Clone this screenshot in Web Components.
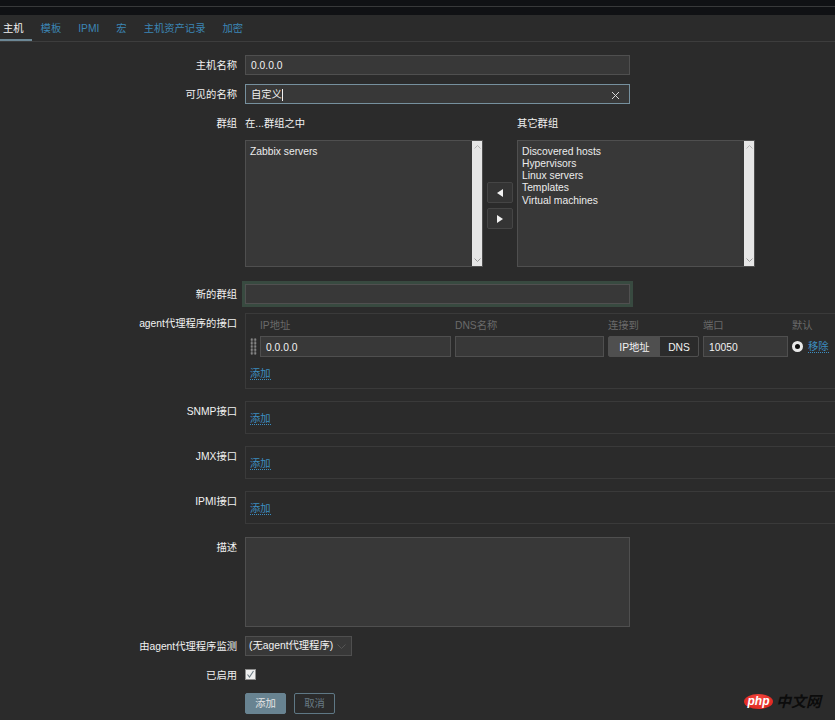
<!doctype html>
<html lang="zh">
  <head>
    <meta charset="UTF-8">
    <title>主机</title>
    <style>
      html, body {
        margin: 0;
        height: 720px;
        overflow: hidden;
        background: #2b2b2b;
        color: #f2f2f2;
        font: 10.3px/12px "Liberation Sans", "Noto Sans CJK SC", sans-serif;
      }
    </style>
  </head>
  <body>
    <top-bar></top-bar>
    <tab-nav>
      <tab-item active>主机</tab-item>
      <tab-item>模板</tab-item>
      <tab-item>IPMI</tab-item>
      <tab-item>宏</tab-item>
      <tab-item>主机资产记录</tab-item>
      <tab-item>加密</tab-item>
    </tab-nav>

    <host-form>
      <form-row label="主机名称" style="margin-top:13px">
        <text-box value="0.0.0.0" style="width:385px"></text-box>
      </form-row>
      <form-row label="可见的名称" style="margin-top:9px">
        <text-box value="自定义" focused clearable style="width:385px"></text-box>
      </form-row>
      <form-row label="群组" style="margin-top:9px">
        <group-picker>
          <list-box slot="in" title="在...群组之中">
            <div>Zabbix servers</div>
          </list-box>
          <list-box slot="other" title="其它群组">
            <div>Discovered hosts</div>
            <div>Hypervisors</div>
            <div>Linux servers</div>
            <div>Templates</div>
            <div style="margin-top:1px">Virtual machines</div>
          </list-box>
        </group-picker>
      </form-row>
      <form-row label="新的群组" style="margin-top:17px">
        <text-box glow style="width:385px"></text-box>
      </form-row>
      <form-row label="agent代理程序的接口" style="margin-top:9px">
        <agent-table></agent-table>
      </form-row>
      <form-row label="SNMP接口" style="margin-top:12px"><add-box></add-box></form-row>
      <form-row label="JMX接口" style="margin-top:12px"><add-box></add-box></form-row>
      <form-row label="IPMI接口" style="margin-top:12px"><add-box></add-box></form-row>
      <form-row label="描述" style="margin-top:13px">
        <text-box style="width:385px;height:90px"></text-box>
      </form-row>
      <form-row label="由agent代理程序监测" style="margin-top:9px">
        <select-box value="(无agent代理程序)"></select-box>
      </form-row>
      <form-row label="已启用" style="margin-top:9px">
        <check-box></check-box>
      </form-row>
      <form-row style="margin-top:8px">
        <form-buttons></form-buttons>
      </form-row>
    </host-form>

    <php-logo></php-logo>

    <template id="top-bar-template">
      <style>
        :host { display: block; height: 15px; background: #101114; box-sizing: border-box; padding-top: 6px; }
        div { height: 1px; background: #38393a; }
      </style>
      <div></div>
    </template>

    <template id="tab-nav-template">
      <style>
        :host {
          display: flex;
          height: 27px;
          box-sizing: border-box;
          border-bottom: 1px solid #3d3d3d;
          margin-left: -5.5px;
        }
      </style>
      <slot></slot>
    </template>

    <template id="tab-item-template">
      <style>
        :host {
          display: block;
          height: 26px;
          box-sizing: border-box;
          padding: 1px 8.5px 0;
          line-height: 26px;
          color: #3c86b5;
          border-bottom: 2px solid transparent;
        }
        :host([active]) { color: #f2f2f2; border-bottom-color: #6c8795; }
      </style>
      <slot></slot>
    </template>

    <template id="host-form-template">
      <style>
        :host { display: flex; flex-direction: column; }
      </style>
      <slot></slot>
    </template>

    <template id="form-row-template">
      <style>
        :host { display: grid; grid-template-columns: 237px 1fr; column-gap: 8px; }
        .label { text-align: right; height: 20px; padding-top: 1px; box-sizing: border-box; line-height: 20px; color: #f2f2f2; white-space: nowrap; }
        .body { min-width: 0; }
      </style>
      <div class="label" id="label"></div>
      <div class="body"><slot></slot></div>
    </template>

    <template id="text-box-template">
      <style>
        :host {
          display: flex;
          align-items: center;
          height: 20px;
          box-sizing: border-box;
          padding: 2px 5px 0;
          background: #383838;
          border: 1px solid #4f4f4f;
          color: #f2f2f2;
        }
        :host([focused]) { border-color: #76909e; }
        :host([glow]) { box-shadow: 0 0 0 3px #384a40; border-color: #505050; }
        .caret { width: 1px; height: 12px; background: #f2f2f2; display: none; }
        :host([focused]) .caret { display: block; }
        svg { margin-left: auto; margin-right: 4px; display: none; }
        :host([clearable]) svg { display: block; }
      </style>
      <span id="value"></span><span class="caret"></span>
      <svg width="9" height="9" viewBox="0 0 9 9"><path d="M1 1l7 7M8 1l-7 7" stroke="#d8d8d8" stroke-width="1" fill="none"/></svg>
    </template>

    <template id="group-picker-template">
      <style>
        :host { display: grid; grid-template-columns: 238px 34px 238px; align-items: stretch; }
        .move { display: flex; flex-direction: column; align-items: center; gap: 5px; padding-top: 69px; }
        button {
          width: 26px;
          height: 21px;
          padding: 0;
          display: flex;
          align-items: center;
          justify-content: center;
          background: #343434;
          border: 1px solid #454545;
          border-radius: 2px;
        }
      </style>
      <slot name="in"></slot>
      <div class="move">
        <button><svg width="6" height="8" viewBox="0 0 6 8"><path d="M6 0v8L0 4z" fill="#f2f2f2"/></svg></button>
        <button><svg width="6" height="8" viewBox="0 0 6 8"><path d="M0 0v8l6-4z" fill="#f2f2f2"/></svg></button>
      </div>
      <slot name="other"></slot>
    </template>

    <template id="list-box-template">
      <style>
        :host { display: block; }
        .title { height: 20px; box-sizing: border-box; padding-top: 1px; line-height: 20px; margin-bottom: 7px; white-space: nowrap; }
        .box {
          display: flex;
          height: 127px;
          box-sizing: border-box;
          background: #383838;
          border: 1px solid #4f4f4f;
        }
        .items { flex: 1; padding: 5px 4px; color: #ececec; }
        .bar {
          width: 10px;
          background: #e6e6e6;
          display: flex;
          flex-direction: column;
          justify-content: space-between;
          align-items: center;
          padding: 4px 0;
        }
      </style>
      <div class="title" id="title"></div>
      <div class="box">
        <div class="items"><slot></slot></div>
        <div class="bar">
          <svg width="7" height="4" viewBox="0 0 7 4"><path d="M.5 3.5l3-3 3 3" stroke="#b4b4b4" fill="none"/></svg>
          <svg width="7" height="4" viewBox="0 0 7 4"><path d="M.5.5l3 3 3-3" stroke="#9a9a9a" fill="none"/></svg>
        </div>
      </div>
    </template>

    <template id="agent-table-template">
      <style>
        :host {
          display: block;
          height: 76px;
          margin-right: -10px;
          box-sizing: border-box;
          border: 1px solid #3a3a3a;
          padding: 4px 0 0 4px;
        }
        .grid {
          display: grid;
          grid-template-columns: 6px 191px 149px 91px 85px auto;
          column-gap: 4px;
          grid-template-rows: 14px 21px;
          row-gap: 4px;
          align-items: center;
        }
        .head { color: #6a6a6a; white-space: nowrap; line-height: 14px; padding-top: 1px; height: 14px; box-sizing: border-box; }
        .field {
          height: 21px;
          box-sizing: border-box;
          padding: 0 5px;
          line-height: 21px;
          background: #383838;
          border: 1px solid #4f4f4f;
        }
        .grip {
          width: 7px;
          height: 17px;
          background-image: radial-gradient(circle, #858585 1.3px, transparent 1.4px);
          background-size: 3.5px 3.4px;
        }
        .toggle { display: flex; height: 21px; box-sizing: border-box; border: 1px solid #4f4f4f; border-radius: 2px; }
        .toggle span { text-align: center; line-height: 21px; height: 19px; }
        .toggle .on { width: 51px; background: #4f4f4f; }
        .toggle .off { flex: 1; }
        .end { display: flex; align-items: center; gap: 5px; }
        .radio {
          width: 11px;
          height: 11px;
          box-sizing: border-box;
          border-radius: 50%;
          background: #0b0b0b;
          border: 3px solid #e8e8e8;
        }
        a { color: #3c8dc0; border-bottom: 1px dotted #3c8dc0; line-height: 14px; height: 12px; display: inline-block; }
        .add { margin-top: 10px; }
      </style>
      <div class="grid">
        <span></span>
        <span class="head">IP地址</span>
        <span class="head">DNS名称</span>
        <span class="head">连接到</span>
        <span class="head">端口</span>
        <span class="head">默认</span>
        <span class="grip"></span>
        <div class="field">0.0.0.0</div>
        <div class="field"></div>
        <div class="toggle"><span class="on">IP地址</span><span class="off">DNS</span></div>
        <div class="field">10050</div>
        <div class="end"><span class="radio"></span><a>移除</a></div>
      </div>
      <a class="add">添加</a>
    </template>

    <template id="add-box-template">
      <style>
        :host {
          display: block;
          height: 33px;
          margin-right: -10px;
          box-sizing: border-box;
          border: 1px solid #3a3a3a;
          padding: 10px 0 0 4px;
        }
        a { display: inline-block; color: #3c8dc0; border-bottom: 1px dotted #3c8dc0; line-height: 14px; height: 12px; }
      </style>
      <a>添加</a>
    </template>

    <template id="select-box-template">
      <style>
        :host {
          display: flex;
          align-items: center;
          width: 107px;
          height: 20px;
          box-sizing: border-box;
          padding: 0 3px;
          background: #383838;
          border: 1px solid #4f4f4f;
          white-space: nowrap;
        }
        svg { margin-left: auto; margin-right: 2px; }
      </style>
      <span id="value"></span>
      <svg width="9" height="5" viewBox="0 0 9 5"><path d="M.5.5l4 4 4-4" stroke="#555" fill="none"/></svg>
    </template>

    <template id="check-box-template">
      <style>
        :host {
          display: block;
          width: 11px;
          height: 11px;
          margin-top: 4px;
          box-sizing: border-box;
          background: #efefef;
          border: 1px solid #8f8f8f;
        }
        svg { display: block; }
      </style>
      <svg width="9" height="9" viewBox="0 0 9 9"><path d="M1.5 4.5l2 2.5 4-6" stroke="#6f7d86" stroke-width="1.1" fill="none"/></svg>
    </template>

    <template id="form-buttons-template">
      <style>
        :host { display: flex; gap: 8px; }
        button {
          width: 41px;
          height: 21px;
          padding: 0;
          border-radius: 2px;
          font: inherit;
          box-sizing: border-box;
        }
        .primary { background: #688391; border: 1px solid #688391; color: #e4e4e4; }
        .plain { background: transparent; border: 1px solid #5f7885; color: #687a84; }
      </style>
      <button class="primary">添加</button>
      <button class="plain">取消</button>
    </template>

    <template id="php-logo-template">
      <style>
        :host {
          position: absolute;
          left: 744px;
          top: 693px;
          display: flex;
          align-items: center;
          gap: 3px;
        }
        .php {
          width: 29px;
          height: 15px;
          border-radius: 50%;
          background: radial-gradient(ellipse at 50% 30%, #f4483f, #d81f19);
          color: #fff;
          font: italic bold 12px/14px "Liberation Sans", sans-serif;
          text-align: center;
        }
        .cn {
          color: #0c0c0c;
          font: italic bold 15px/16px "Noto Sans CJK SC", sans-serif;
          white-space: nowrap;
        }
      </style>
      <span class="php">php</span><span class="cn">中文网</span>
    </template>

    <script>
      // every element just clones its own template
      class Base extends HTMLElement {
        constructor() {
          super()
          const template = document.getElementById(this.localName + "-template")
          this.attachShadow({mode: "open"}).append(template.content.cloneNode(true))
        }
      }

      class FormRow extends Base {
        connectedCallback() {
          this.shadowRoot.getElementById("label").textContent = this.getAttribute("label") || ""
        }
      }
      class ValueBox extends Base {
        connectedCallback() {
          this.shadowRoot.getElementById("value").textContent = this.getAttribute("value") || ""
        }
      }
      class ListBox extends Base {
        connectedCallback() {
          this.shadowRoot.getElementById("title").textContent = this.getAttribute("title") || ""
        }
      }

      customElements.define("form-row", FormRow)
      customElements.define("text-box", class extends ValueBox {})
      customElements.define("select-box", class extends ValueBox {})
      customElements.define("list-box", ListBox)
      ;["top-bar", "tab-nav", "tab-item", "host-form", "group-picker", "agent-table",
        "add-box", "check-box", "form-buttons", "php-logo"].forEach(name =>
        customElements.define(name, class extends Base {}))
    </script>
  </body>
</html>
